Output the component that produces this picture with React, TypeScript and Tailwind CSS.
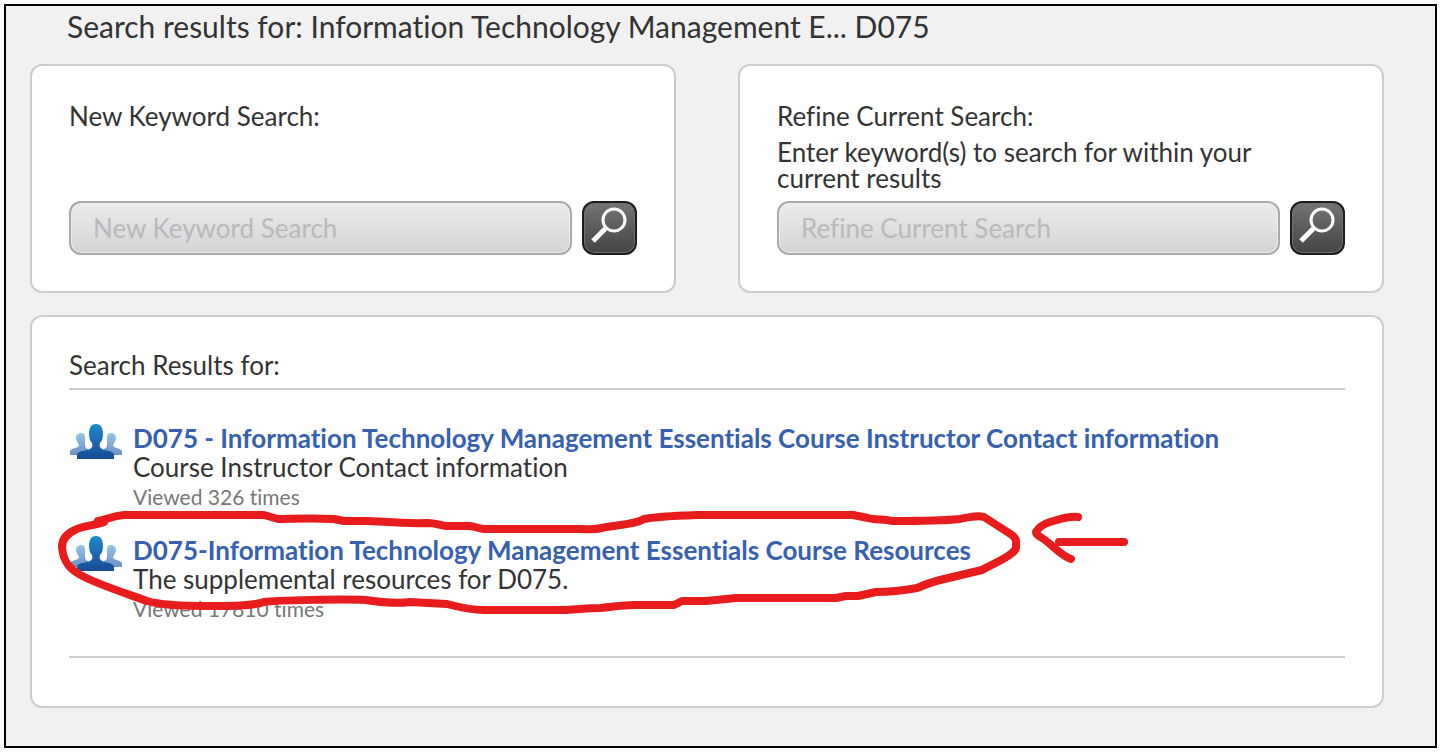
import { useState } from 'react'

const RESULTS = [
  {
    id: 1,
    title: 'D075 - Information Technology Management Essentials Course Instructor Contact information',
    description: 'Course Instructor Contact information',
    views: 326,
  },
  {
    id: 2,
    title: 'D075-Information Technology Management Essentials Course Resources',
    description: 'The supplemental resources for D075.',
    views: 17810,
  },
]

function PeopleIcon() {
  return (
    <svg width="54" height="36" viewBox="0 0 54 36" className="shrink-0" aria-hidden="true">
      <defs>
        <linearGradient id="person" x1="0" y1="0" x2="0" y2="1">
          <stop offset="0" stopColor="#1f8acb" />
          <stop offset="1" stopColor="#184a97" />
        </linearGradient>
        <linearGradient id="personBack" x1="0" y1="0" x2="0" y2="1">
          <stop offset="0" stopColor="#93c6e8" />
          <stop offset="1" stopColor="#6f90c6" />
        </linearGradient>
      </defs>
      <path
        fill="url(#personBack)"
        d="M12 9c3 0 4 2 4 5v7c0 2 1 3 3 4v6H1v-4c1-2 5-3 8-4 1-1 1-2 0-4-1-2-2-3-2-5 0-3 2-5 5-5z"
      />
      <path
        fill="url(#personBack)"
        d="M42 9c-3 0-4 2-4 5v7c0 2-1 3-3 4v6h18v-4c-1-2-5-3-8-4-1-1-1-2 0-4 1-2 2-3 2-5 0-3-2-5-5-5z"
      />
      <path
        fill="url(#person)"
        d="M27 0c5 0 7 4 7 10 0 4-1 7-3 9-1 3 0 5 2 6 5 2 12 2 12 6v4H8v-4c0-4 8-4 13-6 2-1 3-3 2-6-2-2-3-5-3-9 0-6 2-10 7-10z"
      />
    </svg>
  )
}

function SearchIcon() {
  return (
    <svg width="51" height="50" viewBox="0 0 51 50" fill="none" stroke="white" aria-hidden="true">
      <circle cx="30" cy="17" r="11" strokeWidth="3" />
      <path d="M22 25l-3 3" strokeWidth="4" />
      <path d="M21 26L9 38" strokeWidth="5" />
    </svg>
  )
}

function SearchBox({ id, label, hint }: { id: string; label: string; hint?: string }) {
  const [value, setValue] = useState('')

  return (
    <form
      onSubmit={e => e.preventDefault()}
      className="flex-1 min-w-0 flex flex-col justify-between rounded-xl border-2 border-[#cccccc] bg-white px-[37px] pt-[37px] pb-9"
    >
      <div>
        <label htmlFor={id} className="block">{label}:</label>
        {hint && <p className="my-2.5 pr-8">{hint}</p>}
      </div>
      <div className="flex gap-2.5">
        <input
          id={id}
          type="text"
          value={value}
          onChange={e => setValue(e.target.value)}
          placeholder={label}
          className="flex-1 min-w-0 h-[54px] rounded-xl border-2 border-[#a9a9a9] bg-linear-to-b from-[#ebebeb] to-[#d4d4d4] px-[22px] placeholder:text-[#b9babd] outline-none shadow-[inset_0_0_0_1px_#f0f0f0]"
        />
        <button
          type="submit"
          aria-label={label}
          className="w-[55px] h-[54px] rounded-xl border-2 border-[#1c1c1c] bg-linear-to-b from-[#747474] to-[#444444] shadow-[inset_0_0_0_1px_#707070]"
        >
          <SearchIcon />
        </button>
      </div>
    </form>
  )
}

// Red pen marks drawn over the second result
function PenMarks() {
  return (
    <svg
      width="1100"
      height="389"
      viewBox="32 317 1100 389"
      fill="none"
      stroke="#e81c1c"
      strokeWidth="8"
      strokeLinecap="round"
      strokeLinejoin="round"
      className="absolute left-0 top-0 pointer-events-none"
      aria-hidden="true"
    >
      <path d="M104 522C94 526 84 525 75 530C66 534 62 540 62 547C63 560 68 568 79 574C93 583 128 594 147 601C163 606 190 606 210 606C232 606 252 606 264 602C276 600 345 599 366 600C380 602 394 604 410 602L447 604C458 607 470 610 484 610H566C582 609 588 608 600 608C613 607 622 605 634 605H674L682 601H706L736 598H836L846 596H858L876 592C892 592 906 590 917 588C926 584 932 582 940 580L982 570C992 564 1004 560 1012 553Q1017 550 1016 544Q1017 539 1012 535L984 517C978 515 970 517 960 519C940 521 910 521 892 521C885 519 874 520 868 518L853 515H697C676 516 660 516 644 519C634 525 614 525 602 528C594 530 588 529 580 529H484C476 528 474 526 468 526H446C438 525 436 523 428 523C400 524 380 521 366 521H344L334 519C310 518 290 519 278 519L264 515H124C112 516 106 520 98 521" />
      <path d="M1078 517C1068 516 1060 519 1050 522Q1040 525 1036 532Q1036 535 1042 538C1053 545 1060 555 1071 559" />
      <path d="M1059 542H1124" />
    </svg>
  )
}

export default function App() {
  return (
    <div className="bg-white p-1 font-[Lato,sans-serif] text-[26px] leading-[26px] text-[#333333] [font-variant-ligatures:none]">
      <main className="border-2 border-black bg-[#f1f1f1] pl-6 pr-[51px] pb-[38px]">
        <h1 className="px-[37px] pt-0.5 pb-5 text-[30px] leading-9">
          Search results for: Information Technology Management E... D075
        </h1>

        <div className="flex gap-[62px]">
          <SearchBox id="new-search" label="New Keyword Search" />
          <SearchBox
            id="refine-search"
            label="Refine Current Search"
            hint="Enter keyword(s) to search for within your current results"
          />
        </div>

        <section className="relative mt-[22px] rounded-xl border-2 border-[#cccccc] bg-white px-[37px] pt-[35px] pb-12">
          <h2 className="pb-2.5 border-b-2 border-[#cccccc]">Search Results for:</h2>
          <ul className="flex flex-col gap-[25px] pt-[34px] pb-[33px] border-b-2 border-[#cccccc] leading-[29px]">
            {RESULTS.map(result => (
              <li key={result.id} className="flex gap-2.5">
                <PeopleIcon />
                <div className="min-w-0">
                  <a href="#" className="block font-bold text-[#3660b0]">{result.title}</a>
                  <p>{result.description}</p>
                  <p className="text-[21px] text-[#777777]">Viewed {result.views} times</p>
                </div>
              </li>
            ))}
          </ul>
          <PenMarks />
        </section>
      </main>
    </div>
  )
}
